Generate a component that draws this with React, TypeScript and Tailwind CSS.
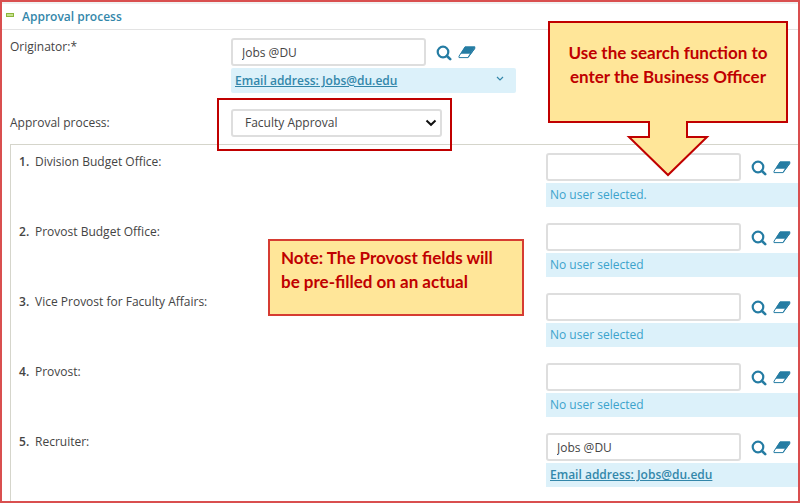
import { useState } from "react";

type Approver = {
  id: string;
  label: string;
  user: string;
  status: string;
};

const approvers: Approver[] = [
  { id: "division-budget", label: "Division Budget Office:", user: "", status: "No user selected." },
  { id: "provost-budget", label: "Provost Budget Office:", user: "", status: "No user selected" },
  { id: "vice-provost", label: "Vice Provost for Faculty Affairs:", user: "", status: "No user selected" },
  { id: "provost", label: "Provost:", user: "", status: "No user selected" },
  { id: "recruiter", label: "Recruiter:", user: "Jobs @DU", status: "" },
];

const SearchIcon = () => (
  <svg width="16" height="16" viewBox="0 0 16 16" fill="none" stroke="#257ca3" aria-hidden="true">
    <circle cx="7" cy="7" r="5.3" strokeWidth="2.2" />
    <path d="M11 11 L14.2 14.2" strokeWidth="2.6" strokeLinecap="round" />
  </svg>
);

const EraserIcon = () => (
  <svg width="18" height="13" viewBox="0 0 18 13" aria-hidden="true">
    <path d="M7 0.5 H17.3 L12.4 7.8 H2.4 Z" fill="#257ca3" />
    <path
      d="M7 1 H16.8 V2.4 L10 11.6 H1 V10.2 Z"
      fill="none"
      stroke="#257ca3"
      strokeWidth="1"
      strokeLinejoin="round"
    />
    <path d="M16.8 1 V3 L10 12 V10.6 Z" fill="#257ca3" />
  </svg>
);

type UserPickerProps = {
  id: string;
  user: string;
};

const UserPicker = ({ id, user }: UserPickerProps) => {
  const [value, setValue] = useState(user);

  return (
    <div className="flex items-center">
      <input
        id={id}
        type="text"
        value={value}
        onChange={(e) => setValue(e.target.value)}
        className="h-7 w-[195px] rounded-[3px] border-2 border-[#dedede] bg-white px-[9px] text-xs text-[#444]"
      />
      <button type="button" aria-label="Search" className="ml-[10px] pt-[2px]">
        <SearchIcon />
      </button>
      <button type="button" aria-label="Clear" className="ml-[6px]" onClick={() => setValue("")}>
        <EraserIcon />
      </button>
    </div>
  );
};

const EmailLink = () => (
  <a href="mailto:Jobs@du.edu" className="font-semibold text-[#3387aa] underline">
    Email address: Jobs@du.edu
  </a>
);

const SearchCallout = () => (
  <div className="pointer-events-none absolute top-[18px] right-[9px] w-[242px]">
    <svg width="242" height="158" viewBox="0 0 242 158" className="block" aria-hidden="true">
      <path
        d="M2 2 H240 V102 H140 V117 H160 L121 155 L82 117 H102 V102 H2 Z"
        fill="#ffe699"
        stroke="#c00000"
        strokeWidth="2"
      />
    </svg>
    <p className="absolute inset-x-0 top-[21px] text-center font-[Lato,sans-serif] text-[17px] leading-6 font-bold text-[#c00000]">
      Use the search function to
      <br />
      enter the Business Officer
    </p>
  </div>
);

const ProvostNote = () => (
  <div className="pointer-events-none absolute top-[237px] left-[266px] h-[77px] w-[256px] border-2 border-[#d63c32] bg-[#ffe699] px-[11px] pt-[5px] font-[Lato,sans-serif] text-[17px] leading-6 font-bold text-[#c00000]">
    Note: The Provost fields will
    <br />
    be pre-filled on an actual
  </div>
);

export default function App() {
  const [process, setProcess] = useState("faculty");

  return (
    <main className="relative overflow-hidden border-2 border-[#d94f4f] bg-white font-['Open_Sans',sans-serif] text-xs text-[#444]">
      <header className="flex h-7 items-center gap-2 border-t-2 border-b border-t-[#f1f1f1] border-b-[#e3e3e3] pt-px pl-1">
        <button
          type="button"
          aria-label="Collapse section"
          className="mb-1 h-1 w-2 border border-[#8cb63c] bg-[#c5e08c]"
        />
        <h2 className="font-semibold text-[#3387aa]">Approval process</h2>
      </header>

      <form className="pt-2 pl-2" onSubmit={(e) => e.preventDefault()}>
        <div className="flex items-start">
          <label htmlFor="originator" className="w-[221px] pt-px leading-4">
            Originator:*
          </label>
          <div>
            <UserPicker id="originator" user="Jobs @DU" />
            <div className="mt-[2px] flex h-[25px] w-[285px] items-center justify-between rounded-xs bg-[#dcf1fa] pr-3 pl-1">
              <EmailLink />
              <button type="button" aria-label="Show details" className="pb-1">
                <svg width="8" height="5" viewBox="0 0 8 5" fill="none" stroke="#3387aa" aria-hidden="true">
                  <path d="M1 1 L4 4 L7 1" strokeWidth="1.2" />
                </svg>
              </button>
            </div>
          </div>
        </div>

        <div className="mt-4 flex items-center">
          <label htmlFor="process" className="w-[221px]">
            Approval process:
          </label>
          <div className="relative">
            <select
              id="process"
              value={process}
              onChange={(e) => setProcess(e.target.value)}
              className="block h-7 w-[211px] appearance-none rounded-[3px] border-2 border-[#dedede] bg-white px-3 text-xs text-[#444]"
            >
              <option value="faculty">Faculty Approval</option>
            </select>
            <svg
              width="12"
              height="8"
              viewBox="0 0 12 8"
              fill="none"
              stroke="#111"
              strokeWidth="2"
              className="pointer-events-none absolute top-[10px] right-[5px]"
              aria-hidden="true"
            >
              <path d="M1.5 1.5 L6 5.8 L10.5 1.5" />
            </svg>
            {/* Highlight around the drop-down */}
            <div className="pointer-events-none absolute -top-[11px] -right-[10px] -bottom-[14px] -left-[14px] z-10 border-2 border-[#c00000]" />
          </div>
        </div>

        <ol className="mt-[7px] space-y-4 border-t border-l border-[#d5d5cb] pt-2 pb-[14px]">
          {approvers.map((item, index) => (
            <li key={item.id} className="flex items-start pl-2">
              <label htmlFor={item.id} className="flex flex-1 pt-px leading-4">
                <span className="w-4 font-semibold">{index + 1}.</span>
                {item.label}
              </label>
              <div className="w-[252px]">
                <UserPicker id={item.id} user={item.user} />
                <div className="mt-[2px] flex h-6 items-center bg-[#dcf1fa] pl-1 text-[#3ba3cc]">
                  {item.status || <EmailLink />}
                </div>
              </div>
            </li>
          ))}
        </ol>
      </form>

      <ProvostNote />
      <SearchCallout />
    </main>
  );
}
